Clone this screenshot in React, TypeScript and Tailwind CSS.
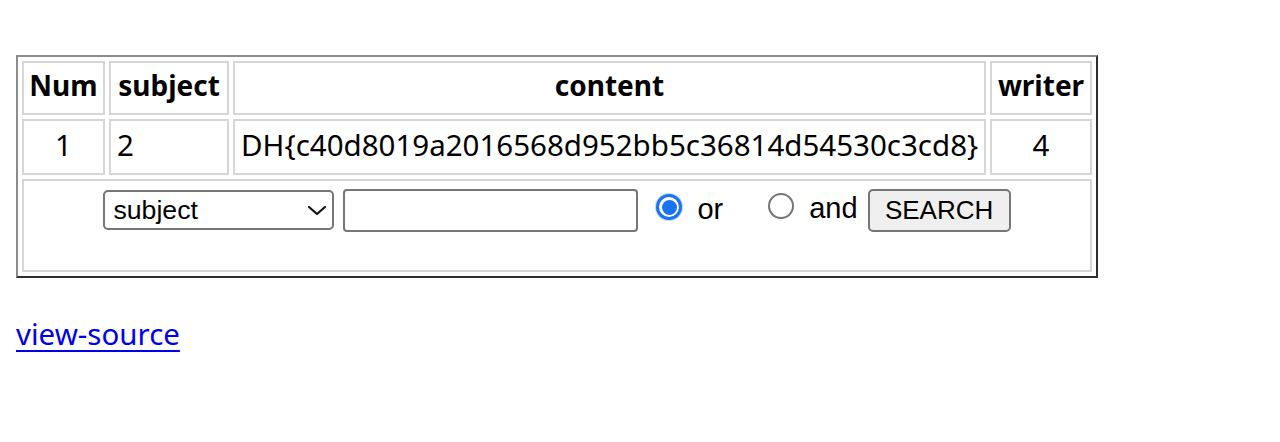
export default function App() {
  const cell = "border-2 border-[#d6d6d6] px-[2px]";
  return (
    <div className="bg-white w-[1280px] h-[442px] pt-[55px] pl-[16px] font-['Noto_Sans',sans-serif] text-black">
      <table className="border-separate border-spacing-[4px] border-2 border-t-[#8c8c8c] border-l-[#8c8c8c] border-r-[#2e2e2e] border-b-[#2e2e2e] text-[29.5px] leading-[40px]">
        <tbody>
          <tr>
            <th className={`${cell} w-[83px] h-[54px] pt-0 pb-[6px] font-bold text-[28px]`}>Num</th>
            <th className={`${cell} w-[120px] h-[54px] pt-0 pb-[6px] font-bold text-[28px]`}>subject</th>
            <th className={`${cell} w-[753px] h-[54px] pt-0 pb-[6px] font-bold text-[28px]`}>content</th>
            <th className={`${cell} w-[102px] h-[54px] pt-0 pb-[6px] font-bold text-[28px]`}>writer</th>
          </tr>
          <tr>
            <td className={`${cell} h-[56px] pt-0 pb-[4px] text-center`}>1</td>
            <td className={`${cell} h-[56px] pt-0 pb-[4px] text-left pl-[6px]`}>2</td>
            <td className={`${cell} h-[56px] pt-0 pb-[4px] text-left pl-[6px] whitespace-nowrap`}>
              DH{"{"}c40d8019a2016568d952bb5c36814d54530c3cd8{"}"}
            </td>
            <td className={`${cell} h-[56px] pt-0 pb-[4px] text-center`}>4</td>
          </tr>
          <tr>
            <td colSpan={4} className="border-2 border-[#d6d6d6] h-[93px] align-top pt-[8px] px-[2px]">
              <div className="flex justify-center items-start font-['Liberation_Sans',Arial,sans-serif]">
                <div className="relative w-[231px] h-[40px]">
                  <select className="appearance-none w-[231px] h-[40px] border-2 border-[#767676] rounded-[5px] bg-white pl-[8px] text-[26.67px] leading-[36px] text-black outline-none">
                    <option>subject</option>
                  </select>
                  <svg className="absolute left-[204px] top-[16px] pointer-events-none" width="20" height="11" viewBox="0 0 20 11">
                    <path d="M2 2 L10 9 L18 2" fill="none" stroke="#111" strokeWidth="2.2" strokeLinecap="round" strokeLinejoin="round" />
                  </svg>
                </div>
                <input type="text" className="ml-[9px] w-[295px] h-[43px] border-2 border-[#767676] rounded-[4px] bg-white outline-none" />
                <div className="ml-[18px] mt-[5px] w-[26px] h-[26px] rounded-full bg-[#1a73f0] flex items-center justify-center shadow-[0_0_0_1px_#bcd6fb]">
                  <div className="w-[20px] h-[20px] rounded-full bg-white flex items-center justify-center">
                    <div className="w-[15px] h-[15px] rounded-full bg-[#1a73f0]" />
                  </div>
                </div>
                <span className="ml-[15px] mt-[4px] text-[29px] leading-[33px]">or</span>
                <div className="ml-[45px] mt-[4px] w-[26px] h-[26px] rounded-full border-2 border-[#767676] bg-white" />
                <span className="ml-[15px] mt-[3px] text-[29px] leading-[33px]">and</span>
                <button className="ml-[10px] w-[143px] h-[43px] bg-[#efefef] border-2 border-[#767676] rounded-[5px] text-[26px] leading-[39px] text-black">
                  SEARCH
                </button>
              </div>
            </td>
          </tr>
        </tbody>
      </table>
      <div className="mt-[36px]">
        <a href="#" className="text-[29.5px] leading-[40px] text-[#0000ee] underline decoration-[2px] underline-offset-[5px]">view-source</a>
      </div>
    </div>
  );
}
